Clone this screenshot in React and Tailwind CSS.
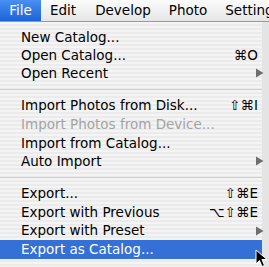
import React from "react";

const font = { fontFamily: '"DejaVu Sans", "Liberation Sans", sans-serif' };

function Arrow() {
  return (
    <svg width="9" height="10" viewBox="0 0 9 10" className="block mr-[-6px]">
      <path d="M1 0.5 L8.5 5 L1 9.5 Z" fill="#6e6e6e" />
    </svg>
  );
}

function Row({ label, shortcut, sub, disabled, active, h = "h-[18.67px]" }) {
  return (
    <div
      className={`${h} flex items-center pl-[21px] pr-[4px] ${
        active ? "bg-[#3470d6] text-white" : disabled ? "text-[#a3a3a3]" : "text-black"
      }`}
    >
      <span className="flex-1 whitespace-nowrap">{label}</span>
      {shortcut && <span className="whitespace-nowrap">{shortcut}</span>}
      {sub && <Arrow />}
    </div>
  );
}

function Sep({ h }) {
  return (
    <div className={`${h} flex items-center`}>
      <div className="h-px w-full bg-[#cfcfcf]" />
    </div>
  );
}

export default function App() {
  return (
    <div className="relative w-[269px] h-[267px] overflow-hidden bg-[#e4e4e4] text-[13.5px]" style={font}>
      <div className="h-[22px] flex items-stretch bg-[linear-gradient(#fbfbfb,#e6e6e6)] border-b border-[#9a9a9a] text-[13.5px] text-black whitespace-nowrap">
        <div className="w-[41px] shrink-0 flex items-center justify-center bg-[linear-gradient(#4a8ff2,#1c63d8)] text-white">File</div>
        <div className="shrink-0 ml-[9px] flex items-center">Edit</div>
        <div className="shrink-0 ml-[19px] flex items-center">Develop</div>
        <div className="shrink-0 ml-[18px] flex items-center">Photo</div>
        <div className="shrink-0 ml-[18px] flex items-center">Settings</div>
      </div>
      <div className="w-[262px] pt-[6px] pb-[10px] bg-[repeating-linear-gradient(#f4f4f4_0px,#f4f4f4_2px,#ebebeb_2px,#ebebeb_4px)]">
        <Row h="h-[18px]" label="New Catalog..." />
        <Row h="h-[18px]" label="Open Catalog..." shortcut="⌘O" />
        <Row h="h-[18px]" label="Open Recent" sub />
        <Sep h="h-[14px]" />
        <Row label="Import Photos from Disk..." shortcut="⇧⌘I" />
        <Row label="Import Photos from Device..." disabled />
        <Row label="Import from Catalog..." />
        <Row label="Auto Import" sub />
        <Sep h="h-[13.33px]" />
        <Row label="Export..." shortcut="⇧⌘E" />
        <Row label="Export with Previous" shortcut="⌥⇧⌘E" />
        <Row label="Export with Preset" sub />
        <Row label="Export as Catalog..." active />
      </div>
      <svg className="absolute left-[255px] top-[249px]" width="14" height="20" viewBox="0 0 14 20">
        <path d="M1 1 L1 15 L4.5 11.5 L7 17.5 L9.5 16.5 L7 10.5 L12 10.5 Z" fill="#000" stroke="#fff" strokeWidth="1" />
      </svg>
    </div>
  );
}
